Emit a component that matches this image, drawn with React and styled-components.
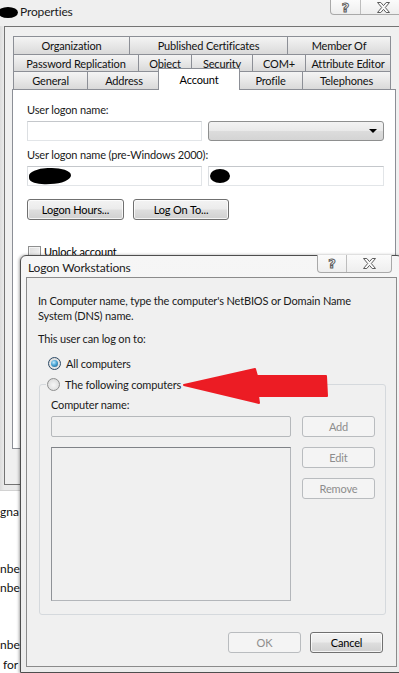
import React from "react";
import styled, { createGlobalStyle, css } from "styled-components";

const GlobalStyle = createGlobalStyle`
  html, body { margin: 0; padding: 0; background: #ffffff; }
  body {
    font-family: Lato, "Liberation Sans", sans-serif;
    font-size: 11px;
    letter-spacing: -0.15px;
    color: #000;
  }
  * { box-sizing: border-box; }
`;

const Desktop = styled.div`
  position: relative;
  width: 399px;
  height: 673px;
  overflow: hidden;
  background: #ffffff;
`;

/* page behind the windows */
const PageBehind = styled.div`
  display: flex;
  flex-direction: column;
  padding-top: 505px;
  font-size: 12px;
  letter-spacing: 0;
`;

const PageLine = styled.div`
  height: 14px;
  line-height: 14px;
  margin-top: ${(p) => p.$gap || 0}px;
  padding-left: ${(p) => p.$indent || 0}px;
  color: #111;
  white-space: nowrap;
`;

/* ---------- shared window chrome ---------- */
const CaptionGroup = styled.div`
  display: flex;
  flex: none;
  height: ${(p) => p.$h}px;
  margin-left: auto;
  margin-right: ${(p) => p.$mr}px;
  margin-top: ${(p) => p.$mt || 0}px;
  border: 1px solid #a9a9a9;
  border-top: none;
  border-radius: 0 0 4px 4px;
  background: linear-gradient(#fbfbfb, #eeeeee);
  overflow: hidden;
`;

const CaptionBtn = styled.div`
  width: ${(p) => p.$w}px;
  display: flex;
  align-items: center;
  justify-content: center;
  & + & {
    border-left: 1px solid #bdbdbd;
  }
`;

const HelpGlyph = styled.span`
  font-family: "DejaVu Sans", sans-serif;
  font-weight: bold;
  font-size: 13px;
  line-height: 13px;
  letter-spacing: 0;
  color: #fbfbfb;
  -webkit-text-stroke: 1px #5c5c5c;
`;

const CloseGlyph = () => (
  <svg width="13" height="11" viewBox="0 0 13 11">
    <polygon
      points="0.5,0.5 3.8,0.5 6.5,3.6 9.2,0.5 12.5,0.5 8.3,5.5 12.5,10.5 9.2,10.5 6.5,7.4 3.8,10.5 0.5,10.5 4.7,5.5"
      fill="#fbfbfb"
      stroke="#5c5c5c"
      strokeWidth="1"
      strokeLinejoin="round"
    />
  </svg>
);

const Caption = ({ h, mr, mt, help, close }) => (
  <CaptionGroup $h={h} $mr={mr} $mt={mt}>
    <CaptionBtn $w={help}>
      <HelpGlyph>?</HelpGlyph>
    </CaptionBtn>
    <CaptionBtn $w={close}>
      <CloseGlyph />
    </CaptionBtn>
  </CaptionGroup>
);

const Redaction = styled.span`
  display: block;
  flex: none;
  width: ${(p) => p.$w}px;
  height: ${(p) => p.$h}px;
  margin-left: ${(p) => p.$ml || 0}px;
  background: #000;
  border-radius: ${(p) => p.$r || "50%"};
  transform: rotate(${(p) => p.$rot || 0}deg);
`;

/* ---------- buttons ---------- */
const PushButton = styled.div`
  flex: none;
  width: ${(p) => p.$w}px;
  height: 21px;
  display: flex;
  align-items: center;
  justify-content: center;
  border-radius: 3px;
  line-height: 14px;
  ${(p) =>
    p.$disabled
      ? css`
          border: 1px solid #b9bcbf;
          background: #f4f4f4;
          color: #8d8d8d;
        `
      : css`
          border: 1px solid #707070;
          background: linear-gradient(#f3f3f3 0%, #ebebeb 48%, #dedede 52%, #d0d0d0 100%);
          box-shadow: inset 0 0 0 1px rgba(255, 255, 255, 0.75);
          color: #000;
        `}
`;

/* ---------- Properties window ---------- */
const PropsWindow = styled.div`
  position: absolute;
  left: -4px;
  top: 0;
  width: 424px;
  height: 491px;
  display: flex;
  flex-direction: column;
  background: linear-gradient(to right, #c9c9c9 0px, #dcdcdc 4px, #ebebeb 8px);
  border-bottom: 1px solid #d2d2d2;
`;

const TitleBar = styled.div`
  height: 26px;
  flex: none;
  display: flex;
  align-items: flex-start;
  padding-left: 2px;
  background: #efefef;
`;

const TitleText = styled.div`
  display: flex;
  align-items: center;
  gap: 2px;
  margin-top: ${(p) => p.$mt}px;
  line-height: 14px;
  font-size: 12px;
  color: #1b1b1b;
`;

const PropsClient = styled.div`
  flex: 1;
  margin: 0 0 5px 8px;
  border: 1px solid #747474;
  background: #f0f0f0;
  padding: 9px 0 0 8px;
`;

const TabRow = styled.div`
  display: flex;
  width: 378px;
  height: ${(p) => p.$h}px;
`;

const Tab = styled.div`
  flex: none;
  width: ${(p) => p.$w}px;
  height: 100%;
  display: flex;
  align-items: center;
  justify-content: center;
  border: 1px solid #8c8f96;
  border-bottom: none;
  border-right-width: ${(p) => (p.$last ? 1 : 0)}px;
  background: linear-gradient(#f4f4f4, #e6e6e6 55%, #d9d9d9);
  color: #111;
  white-space: nowrap;
`;

const ActiveTab = styled.div`
  flex: none;
  position: relative;
  z-index: 2;
  width: ${(p) => p.$w}px;
  height: 22px;
  margin: -3px -2px 0 -2px;
  display: flex;
  align-items: center;
  justify-content: center;
  border: 1px solid #8c8f96;
  border-bottom: none;
  background: #ffffff;
  color: #000;
`;

const TabPanel = styled.div`
  position: relative;
  z-index: 1;
  width: 384px;
  height: 360px;
  margin-left: -1px;
  border: 1px solid #8c8f96;
  background: #ffffff;
  padding: 13px 0 0 14px;
  display: flex;
  flex-direction: column;
`;

const FieldLabel = styled.div`
  line-height: 14px;
  margin-top: ${(p) => p.$mt || 0}px;
  color: #1a1a1a;
`;

const InputRow = styled.div`
  display: flex;
  gap: 6px;
  margin-top: ${(p) => p.$mt || 0}px;
`;

const TextBox = styled.div`
  flex: none;
  width: ${(p) => p.$w}px;
  height: 20px;
  display: flex;
  align-items: center;
  border: 1px solid;
  border-color: #c4c7cb #e2e5e8 #e2e5e8 #dcdfe2;
  background: #ffffff;
`;

const ComboBox = styled.div`
  flex: none;
  width: ${(p) => p.$w}px;
  height: 20px;
  display: flex;
  align-items: center;
  justify-content: flex-end;
  padding-right: 6px;
  border: 1px solid #8e8f8f;
  border-radius: 3px;
  background: linear-gradient(#f3f3f3, #e9e9e9 50%, #dcdcdc 52%, #d4d4d4);
`;

const ComboArrow = styled.span`
  width: 0;
  height: 0;
  border-left: 4px solid transparent;
  border-right: 4px solid transparent;
  border-top: 4px solid #000;
`;

const ButtonRow = styled.div`
  display: flex;
  gap: ${(p) => p.$gap}px;
  margin-top: ${(p) => p.$mt || 0}px;
  justify-content: ${(p) => p.$justify || "flex-start"};
  padding-right: ${(p) => p.$pr || 0}px;
`;

const CheckRow = styled.div`
  display: flex;
  align-items: center;
  gap: 3px;
  margin-top: ${(p) => p.$mt}px;
  padding-left: 1px;
  line-height: 14px;
`;

const CheckBox = styled.span`
  width: 13px;
  height: 13px;
  border: 1px solid #8e8f8f;
  background: linear-gradient(135deg, #dcdcdc, #f6f6f6);
  box-shadow: inset 0 0 0 1px #f4f4f4;
`;

/* ---------- Logon Workstations dialog ---------- */
const Dialog = styled.div`
  position: absolute;
  left: 20px;
  top: 255px;
  width: 383px;
  display: flex;
  flex-direction: column;
  border: 1px solid #4e4e4e;
  border-radius: 6px 6px 0 0;
  background: linear-gradient(#f6f6f6, #ececec);
  box-shadow: -1px 0 3px rgba(0, 0, 0, 0.35);
  z-index: 5;
`;

const DialogTitleBar = styled.div`
  height: 21px;
  flex: none;
  display: flex;
  align-items: flex-start;
  padding-left: 7px;
`;

const DialogClient = styled.div`
  margin: 0 5px 5px 5px;
  border: 1px solid #8b8b8b;
  background: #f0f0f0;
  padding: 15px 10px 13px 11px;
  display: flex;
  flex-direction: column;
`;

const Paragraph = styled.div`
  line-height: ${(p) => p.$lh || 14}px;
  margin-top: ${(p) => p.$mt || 0}px;
  color: #1a1a1a;
  white-space: nowrap;
`;

const RadioRow = styled.label`
  display: flex;
  align-items: center;
  gap: 5px;
  height: 16px;
  margin-top: ${(p) => p.$mt || 0}px;
  padding-left: ${(p) => p.$pl || 0}px;
  color: #1a1a1a;
`;

const Radio = styled.span`
  position: relative;
  flex: none;
  width: 13px;
  height: 13px;
  border-radius: 50%;
  border: 1px solid ${(p) => (p.$checked ? "#2c4a66" : "#8e8f8f")};
  background: radial-gradient(circle at 50% 55%, #f6f6f6 0%, #e2e2e2 60%, #c9c9c9 100%);
  ${(p) =>
    p.$checked &&
    css`
      &::after {
        content: "";
        position: absolute;
        left: 2px;
        top: 2px;
        width: 7px;
        height: 7px;
        border-radius: 50%;
        background: radial-gradient(circle at 40% 35%, #c5ecff 0%, #4aa6d6 45%, #1b4f78 100%);
      }
    `}
`;

const GroupBox = styled.fieldset`
  margin: 5px 0 0 1px;
  padding: 0 10px 13px 11px;
  border: 1px solid #d5d9dd;
  border-radius: 3px;
  min-width: 0;
`;

const GroupLegend = styled.legend`
  margin-left: -5px;
  padding: 0 3px 0 1px;
`;

const GroupBody = styled.div`
  display: flex;
  gap: 11px;
  margin-top: 6px;
`;

const Column = styled.div`
  display: flex;
  flex-direction: column;
  gap: ${(p) => p.$gap || 0}px;
  padding-top: ${(p) => p.$pt || 0}px;
`;

const DisabledBox = styled.div`
  width: 240px;
  height: ${(p) => p.$h}px;
  margin-top: ${(p) => p.$mt || 0}px;
  border: 1px solid;
  border-color: ${(p) => (p.$list ? "#7f8287 #b3b6ba #b3b6ba #8f9297" : "#b5b8bb")};
  border-radius: ${(p) => (p.$list ? 0 : 2)}px;
  background: #f0f0f0;
`;

const ArrowOverlay = styled.svg`
  position: absolute;
  left: 180px;
  top: 365px;
  z-index: 10;
`;

export default function App() {
  return (
    <>
      <GlobalStyle />
      <Desktop>
        <PageBehind>
          <PageLine>gna</PageLine>
          <PageLine $gap={43}>nbe</PageLine>
          <PageLine $gap={5}>nbe</PageLine>
          <PageLine $gap={43}>nbe</PageLine>
          <PageLine $gap={6} $indent={3}>for</PageLine>
        </PageBehind>

        <PropsWindow>
          <TitleBar>
            <TitleText $mt={5}>
              <Redaction $w={20} $h={11} />
              Properties
            </TitleText>
            <Caption h={15} mr={14} help={29} close={45} />
          </TitleBar>
          <PropsClient>
            <TabRow $h={18}>
              <Tab $w={116}>Organization</Tab>
              <Tab $w={158}>Published Certificates</Tab>
              <Tab $w={104} $last>Member Of</Tab>
            </TabRow>
            <TabRow $h={17}>
              <Tab $w={125}>Password Replication</Tab>
              <Tab $w={53}>Object</Tab>
              <Tab $w={61}>Security</Tab>
              <Tab $w={53}>COM+</Tab>
              <Tab $w={86} $last>Attribute Editor</Tab>
            </TabRow>
            <TabRow $h={18}>
              <Tab $w={74}>General</Tab>
              <Tab $w={73}>Address</Tab>
              <ActiveTab $w={82}>Account</ActiveTab>
              <Tab $w={64}>Profile</Tab>
              <Tab $w={89} $last>Telephones</Tab>
            </TabRow>
            <TabPanel>
              <FieldLabel>User logon name:</FieldLabel>
              <InputRow $mt={4}>
                <TextBox $w={175} />
                <ComboBox $w={176}>
                  <ComboArrow />
                </ComboBox>
              </InputRow>
              <FieldLabel $mt={7}>User logon name (pre-Windows 2000):</FieldLabel>
              <InputRow $mt={4}>
                <TextBox $w={175}>
                  <Redaction $w={42} $h={16} $ml={1} $r="45% 50% 50% 40%" $rot={-2} />
                </TextBox>
                <TextBox $w={176}>
                  <Redaction $w={20} $h={14} $ml={1} $r="50%" />
                </TextBox>
              </InputRow>
              <ButtonRow $gap={9} $mt={13}>
                <PushButton $w={97}>Logon Hours...</PushButton>
                <PushButton $w={96}>Log On To...</PushButton>
              </ButtonRow>
              <CheckRow $mt={25}>
                <CheckBox />
                Unlock account
              </CheckRow>
            </TabPanel>
          </PropsClient>
        </PropsWindow>

        <Dialog>
          <DialogTitleBar>
            <TitleText $mt={5}>Logon Workstations</TitleText>
            <Caption h={18} mr={10} mt={-1} help={28} close={45} />
          </DialogTitleBar>
          <DialogClient>
            <Paragraph $lh={15}>
              In Computer name, type the computer's NetBIOS or Domain Name
              <br />
              System (DNS) name.
            </Paragraph>
            <Paragraph $mt={9}>This user can log on to:</Paragraph>
            <RadioRow $mt={9} $pl={10}>
              <Radio $checked />
              All computers
            </RadioRow>
            <GroupBox>
              <GroupLegend>
                <RadioRow>
                  <Radio />
                  The following computers
                </RadioRow>
              </GroupLegend>
              <GroupBody>
                <Column>
                  <Paragraph>Computer name:</Paragraph>
                  <DisabledBox $h={21} $mt={4} />
                  <DisabledBox $h={154} $mt={10} $list />
                </Column>
                <Column $gap={10} $pt={18}>
                  <PushButton $w={73} $disabled>Add</PushButton>
                  <PushButton $w={73} $disabled>Edit</PushButton>
                  <PushButton $w={73} $disabled>Remove</PushButton>
                </Column>
              </GroupBody>
            </GroupBox>
            <ButtonRow $gap={9} $mt={17} $justify="flex-end" $pr={3}>
              <PushButton $w={73} $disabled>OK</PushButton>
              <PushButton $w={73}>Cancel</PushButton>
            </ButtonRow>
          </DialogClient>
        </Dialog>

        <ArrowOverlay width="150" height="42" viewBox="0 0 150 42">
          <polygon
            points="4,20 75,4 77,11 146,11 147,31 78,31 79,38"
            fill="#ec1c24"
            stroke="#ec1c24"
            strokeWidth="2"
            strokeLinejoin="round"
          />
        </ArrowOverlay>
      </Desktop>
    </>
  );
}
